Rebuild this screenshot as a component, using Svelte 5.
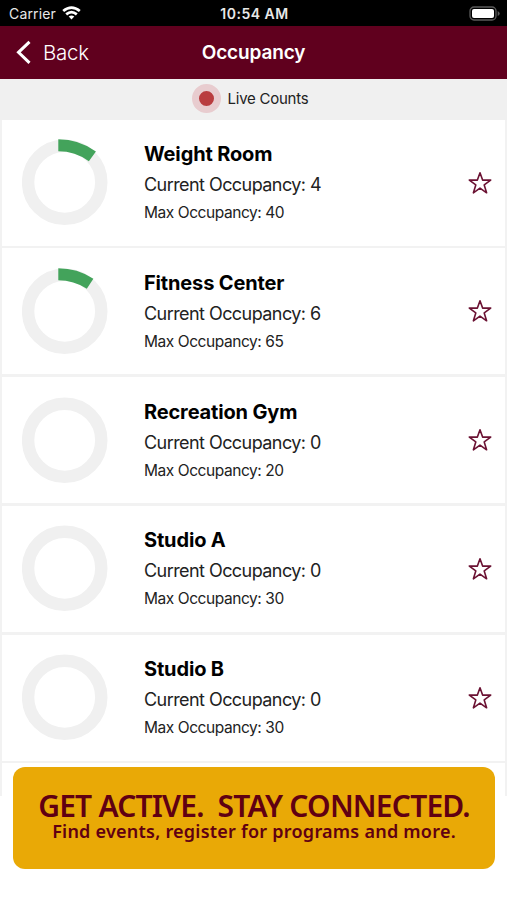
<script>
  let rooms = $state([
    { name: 'Weight Room',    current: 4, max: 40, favorite: false },
    { name: 'Fitness Center', current: 6, max: 65, favorite: false },
    { name: 'Recreation Gym', current: 0, max: 20, favorite: false },
    { name: 'Studio A',       current: 0, max: 30, favorite: false },
    { name: 'Studio B',       current: 0, max: 30, favorite: false },
  ]);

  // Wedge sweeping clockwise from the top of the gauge, 12px thick.
  function wedge(room) {
    const a = (room.current / room.max) * Math.PI * 2;
    const cx = 36.3, cy = 64.3;
    const p = (r) => `${cx + r * Math.sin(a)} ${cy - r * Math.cos(a)}`;
    return `M${cx} ${cy - 64}A64 64 0 0 1 ${p(64)}L${p(52)}A52 52 0 0 0 ${cx} ${cy - 52}Z`;
  }
</script>

<div class="screen">
  <!-- Status bar -->
  <div class="status">
    <div class="carrier">
      <span>Carrier</span>
      <svg width="19" height="14" viewBox="0 0 19 14" fill="none" stroke="#fff" stroke-width="2.8">
        <path d="M1.2 5Q9.5-1.8 17.8 5" />
        <path d="M4.2 8.3Q9.5 4 14.8 8.3" />
        <path d="M6.7 10.6Q9.5 8.4 12.3 10.6L9.5 13.6Z" fill="#fff" stroke="none" />
      </svg>
    </div>
    <span class="time">10:54 AM</span>
    <svg class="battery" width="31" height="15" viewBox="0 0 31 15">
      <rect x="1" y="1" width="26" height="13" rx="4" fill="none" stroke="#5b5b5b" stroke-width="1.3" />
      <rect x="3" y="3" width="22" height="9" rx="2" fill="#fff" />
      <path d="M28.7 5v5q2-1 2-2.5t-2-2.5" fill="#5b5b5b" />
    </svg>
  </div>

  <!-- Nav bar -->
  <header>
    <button class="back">
      <svg width="16" height="25" viewBox="0 0 16 25" fill="none" stroke="#fff" stroke-width="3">
        <path d="M13.5 1.8 2.5 12.3 13.5 22.8" />
      </svg>
      <span>Back</span>
    </button>
    <h1>Occupancy</h1>
    <div></div>
  </header>

  <div class="live">
    <span class="pulse"></span>
    <span>Live Counts</span>
  </div>

  <main>
    {#each rooms as room}
      <section class="card">
        <svg class="gauge" width="86" height="87" viewBox="0 0 86 87">
          <circle cx="42.7" cy="43.3" r="36.6" fill="none" stroke="#f0f0f0" stroke-width="12.4" />
          {#if room.current > 0}
            <path d={wedge(room)} fill="#43a35b" />
          {/if}
        </svg>
        <div class="info">
          <h2>{room.name}</h2>
          <p class="current">Current Occupancy: {room.current}</p>
          <p class="max">Max Occupancy: {room.max}</p>
        </div>
        <button class="star" aria-label="Favorite" onclick={() => (room.favorite = !room.favorite)}>
          <svg width="24" height="24" viewBox="0 0 24 24" fill={room.favorite ? '#6b1233' : 'none'} stroke="#6b1233" stroke-width="1.6" stroke-linejoin="round">
            <path d="M12 1.7 14.6 9.1H22.7L16.2 13.9 18.6 21.8 12 17.1 5.4 21.8 7.8 13.9 1.3 9.1H9.4Z" />
          </svg>
        </button>
      </section>
    {/each}
    <div class="tail"></div>
  </main>

  <div class="banner">
    <strong>GET ACTIVE.&nbsp; STAY CONNECTED.</strong>
    <span>Find events, register for programs and more.</span>
  </div>
</div>

<style>
  :global(body) { margin: 0; background: #fff; }
  .screen {
    position: relative;
    display: flex;
    flex-direction: column;
    width: 507px;
    height: 900px;
    overflow: hidden;
    background: #fff;
    font-family: Inter, "Liberation Sans", sans-serif;
    color: #000;
  }
  button { border: 0; padding: 0; background: none; font: inherit; color: inherit; }
  h1, h2, p { margin: 0; }

  /* Status bar */
  .status {
    display: grid;
    grid-template-columns: 1fr auto 1fr;
    align-items: center;
    height: 26px;
    padding: 0 7px 0 9px;
    box-sizing: border-box;
    background: #000;
    color: #e8e8e8;
    font-size: 14px;
  }
  .carrier { display: flex; align-items: center; gap: 6px; letter-spacing: 0.15px; }
  .time { font-weight: 600; font-size: 14px; letter-spacing: 0.5px; }
  .battery { justify-self: end; }

  /* Nav bar */
  header {
    display: grid;
    grid-template-columns: 1fr auto 1fr;
    align-items: center;
    height: 53px;
    padding: 0 16px;
    background: #60001e;
    color: #fff;
  }
  .back {
    display: flex;
    align-items: center;
    gap: 11px;
    font-size: 20.5px;
    font-weight: 300;
    letter-spacing: -0.3px;
  }
  h1 { font-size: 19px; font-weight: 600; letter-spacing: -0.15px; }

  .live {
    display: flex;
    align-items: center;
    justify-content: center;
    gap: 7px;
    height: 40.7px;
    padding: 0 7px 1.7px 0;
    box-sizing: border-box;
    background: #f0f0f0;
    font-size: 15px;
    letter-spacing: -0.25px;
    color: #222;
  }
  .pulse {
    width: 15px;
    height: 15px;
    border: 7px solid #e8cccf;
    border-radius: 50%;
    background: #b93c3f;
  }

  /* Room list */
  main {
    display: flex;
    flex-direction: column;
    gap: 2.75px;
    padding: 0 2px;
    background: #f2f2f2;
  }
  .card {
    display: flex;
    align-items: center;
    height: 126px;
    padding: 0 13px 0 20px;
    box-sizing: border-box;
    background: #fff;
  }
  .gauge { flex: none; }
  .info { flex: 1; padding-left: 36px; white-space: nowrap; }
  h2 { font-size: 20px; line-height: 30px; font-weight: 700; letter-spacing: -0.15px; }
  .current { font-size: 18px; line-height: 31px; letter-spacing: -0.56px; color: #222; }
  .max { font-size: 15.5px; line-height: 26px; letter-spacing: -0.44px; color: #222; }
  .star { display: flex; }
  .tail { height: 33px; background: #fff; }

  /* Promo banner, pinned over the list */
  .banner {
    position: absolute;
    left: 13px;
    right: 12px;
    top: 767px;
    height: 102px;
    display: flex;
    flex-direction: column;
    align-items: center;
    padding-top: 23px;
    box-sizing: border-box;
    border-radius: 12px;
    background: #e9a906;
    color: #600012;
    font-family: "Noto Sans", "Open Sans", sans-serif;
    white-space: nowrap;
  }
  .banner strong { font-size: 30px; line-height: 32px; font-weight: 600; letter-spacing: -0.8px; }
  .banner span { font-size: 18px; line-height: 18px; font-weight: 600; letter-spacing: 0.24px; }
</style>
